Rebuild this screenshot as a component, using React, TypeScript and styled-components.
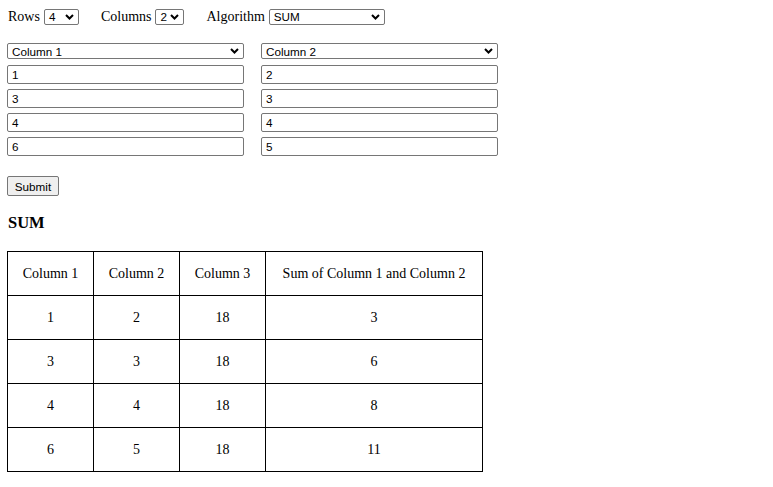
import React from "react";
import styled, { createGlobalStyle } from "styled-components";

const GlobalStyle = createGlobalStyle`
  html, body { margin: 0; padding: 0; background: #fff; }
  body { font-family: "Liberation Serif", "Times New Roman", serif; font-size: 14px; color: #000; }
`;

const Page = styled.div`
  padding: 2px 7px 0 7px;
`;

const TopBar = styled.div`
  display: flex;
  align-items: center;
  height: 16px;
  margin-top: 7px;
  gap: 21px;
`;

const Field = styled.label`
  display: flex;
  align-items: center;
  gap: 4px;
  padding-left: 1px;
  font-size: 14px;
  line-height: 16px;
`;

const SelectWrap = styled.span<{ $w: number }>`
  position: relative;
  display: inline-flex;
  align-items: center;
  width: ${(p) => p.$w}px;
  height: 16px;
  box-sizing: border-box;
  border: 1px solid #767676;
  border-radius: 2px;
  background: #fff;
  font-family: "Liberation Sans", Arial, sans-serif;
  font-size: 11.7px;
  color: #000;
  padding-left: 4px;
`;

const Chevron = styled.svg`
  position: absolute;
  right: 4px;
  top: 4px;
  width: 9px;
  height: 6px;
`;

const Form = styled.div`
  display: grid;
  grid-template-columns: 237px 237px;
  column-gap: 17px;
  margin-top: 18px;
`;

const Col = styled.div`
  display: flex;
  flex-direction: column;
  gap: 5px;
  & > :first-child { margin-bottom: 1px; }
`;

const Input = styled.div`
  box-sizing: border-box;
  height: 19px;
  border: 1px solid #767676;
  border-radius: 2px;
  font-family: "Liberation Sans", Arial, sans-serif;
  font-size: 11.7px;
  line-height: 17px;
  padding-left: 4px;
  color: #000;
`;

const Button = styled.button`
  margin-top: 20px;
  box-sizing: border-box;
  width: 52px;
  height: 20px;
  padding: 0;
  background: #efefef;
  border: 1px solid #767676;
  border-radius: 2px;
  font-family: "Liberation Sans", Arial, sans-serif;
  font-size: 11.7px;
  color: #000;
`;

const Heading = styled.h3`
  margin: 17px 0 0 1px;
  font-size: 16.5px;
  line-height: 20px;
  font-weight: bold;
`;

const Table = styled.table`
  margin-top: 18px;
  border-collapse: collapse;
  border: 1px solid #000;
`;

const Cell = styled.td<{ $w: number }>`
  border: 1px solid #000;
  width: ${(p) => p.$w}px;
  height: 44px;
  padding: 0;
  box-sizing: border-box;
  text-align: center;
  vertical-align: middle;
  font-size: 14px;
`;

const Select = ({ w, value }: { w: number; value: string }) => (
  <SelectWrap $w={w}>
    {value}
    <Chevron viewBox="0 0 9 6">
      <polyline points="1,1 4.5,4.5 8,1" fill="none" stroke="#000" strokeWidth="2" />
    </Chevron>
  </SelectWrap>
);

const col1 = ["1", "3", "4", "6"];
const col2 = ["2", "3", "4", "5"];
const sums = ["3", "6", "8", "11"];
const widths = [86, 86, 86, 217];

export default function App() {
  return (
    <Page>
      <GlobalStyle />
      <TopBar>
        <Field>
          Rows <Select w={35} value="4" />
        </Field>
        <Field>
          Columns <Select w={29} value="2" />
        </Field>
        <Field>
          Algorithm <Select w={116} value="SUM" />
        </Field>
      </TopBar>
      <Form>
        <Col>
          <Select w={237} value="Column 1" />
          {col1.map((v, i) => (
            <Input key={i}>{v}</Input>
          ))}
        </Col>
        <Col>
          <Select w={237} value="Column 2" />
          {col2.map((v, i) => (
            <Input key={i}>{v}</Input>
          ))}
        </Col>
      </Form>
      <Button>Submit</Button>
      <Heading>SUM</Heading>
      <Table>
        <tbody>
          <tr>
            {["Column 1", "Column 2", "Column 3", "Sum of Column 1 and Column 2"].map((h, i) => (
              <Cell key={i} $w={widths[i]}>{h}</Cell>
            ))}
          </tr>
          {col1.map((v, i) => (
            <tr key={i}>
              <Cell $w={86}>{v}</Cell>
              <Cell $w={86}>{col2[i]}</Cell>
              <Cell $w={86}>18</Cell>
              <Cell $w={217}>{sums[i]}</Cell>
            </tr>
          ))}
        </tbody>
      </Table>
    </Page>
  );
}
